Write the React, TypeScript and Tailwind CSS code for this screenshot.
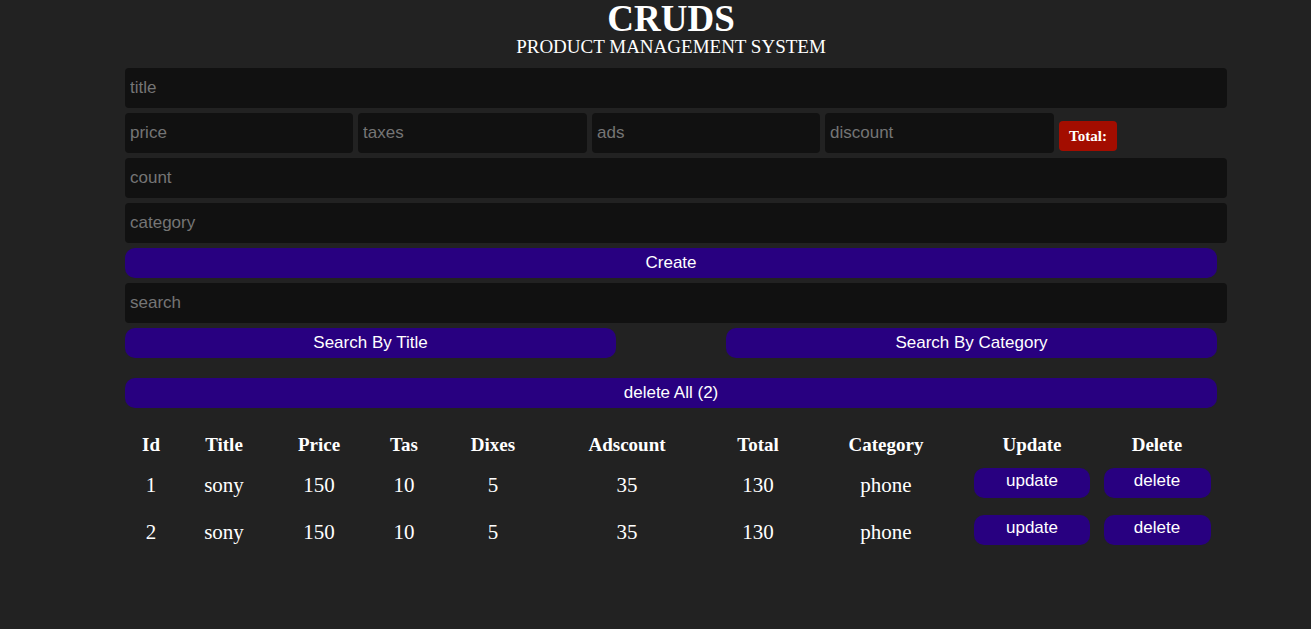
const products = [
  { id: 1, title: 'sony', price: 150, taxes: 10, ads: 5, discount: 35, total: 130, category: 'phone' },
  { id: 2, title: 'sony', price: 150, taxes: 10, ads: 5, discount: 35, total: 130, category: 'phone' },
];

const serif = "font-['Liberation_Serif',serif]";
const sans = "font-['Liberation_Sans',Arial,sans-serif]";

const inputCls =
  'h-[40px] rounded-[4px] bg-[#111111] px-[5px] text-[17px] text-white placeholder:text-[#757575] outline-none border-0';

const btnCls = 'h-[30px] rounded-[10px] bg-[#280080] text-[17px] text-white';

const App = () => {
  return (
    <div className={`min-h-[629px] bg-[#222222] ${sans}`}>
      <div className="ml-[125px] w-[1092px]">
        {/* Header */}
        <div className={`text-center text-white ${serif}`}>
          <h1 className="text-[37px] font-bold leading-[38px]">CRUDS</h1>
          <p className="text-[19px] leading-[18px]">PRODUCT MANAGEMENT SYSTEM</p>
        </div>

        {/* Inputs */}
        <div className="mt-[12px] flex flex-col gap-[5px]">
          <input className={`${inputCls} w-[1102px]`} placeholder="title" />
          <div className="flex gap-[5px]">
            <input className={`${inputCls} w-[228px]`} placeholder="price" />
            <input className={`${inputCls} w-[229px]`} placeholder="taxes" />
            <input className={`${inputCls} w-[228px]`} placeholder="ads" />
            <input className={`${inputCls} w-[229px]`} placeholder="discount" />
            <small className={`mt-[8px] flex h-[30px] w-[58px] items-center justify-center rounded-[4px] bg-[#a30d00] text-[15px] font-bold text-white ${serif}`}>
              Total:
            </small>
          </div>
          <input className={`${inputCls} w-[1102px]`} placeholder="count" />
          <input className={`${inputCls} w-[1102px]`} placeholder="category" />
          <button className={`${btnCls} w-[1092px]`}>Create</button>
          <input className={`${inputCls} w-[1102px]`} placeholder="search" />
          <div className="flex justify-between">
            <button className={`${btnCls} w-[491px]`}>Search By Title</button>
            <button className={`${btnCls} w-[491px]`}>Search By Category</button>
          </div>
        </div>

        <button className={`${btnCls} mt-[20px] w-[1092px]`}>delete All (2)</button>

        {/* Table */}
        <table className={`mt-[17px] w-[1090px] table-fixed border-collapse text-center text-white ${serif}`}>
          <colgroup>
            <col className="w-[52px]" />
            <col className="w-[94px]" />
            <col className="w-[96px]" />
            <col className="w-[74px]" />
            <col className="w-[104px]" />
            <col className="w-[164px]" />
            <col className="w-[98px]" />
            <col className="w-[158px]" />
            <col className="w-[134px]" />
            <col className="w-[116px]" />
          </colgroup>
          <thead>
            <tr className="h-[40px] text-[19px] font-bold">
              <th>Id</th>
              <th>Title</th>
              <th>Price</th>
              <th>Tas</th>
              <th>Dixes</th>
              <th>Adscount</th>
              <th>Total</th>
              <th>Category</th>
              <th>Update</th>
              <th>Delete</th>
            </tr>
          </thead>
          <tbody className="text-[21px] leading-[34px]">
            {products.map((p) => (
              <tr key={p.id} className="h-[47px] align-top [&>td]:pt-[3px]">
                <td>{p.id}</td>
                <td>{p.title}</td>
                <td>{p.price}</td>
                <td>{p.taxes}</td>
                <td>{p.ads}</td>
                <td>{p.discount}</td>
                <td>{p.total}</td>
                <td>{p.category}</td>
                <td>
                  <button className={`mx-auto block h-[30px] w-[116px] rounded-[10px] bg-[#280080] pb-[4px] text-[17px] leading-[20px] text-white ${sans}`}>
                    update
                  </button>
                </td>
                <td>
                  <button className={`mx-auto block h-[30px] w-[107px] rounded-[10px] bg-[#280080] pb-[4px] text-[17px] leading-[20px] text-white ${sans}`}>
                    delete
                  </button>
                </td>
              </tr>
            ))}
          </tbody>
        </table>
      </div>
    </div>
  );
};

export default App;
